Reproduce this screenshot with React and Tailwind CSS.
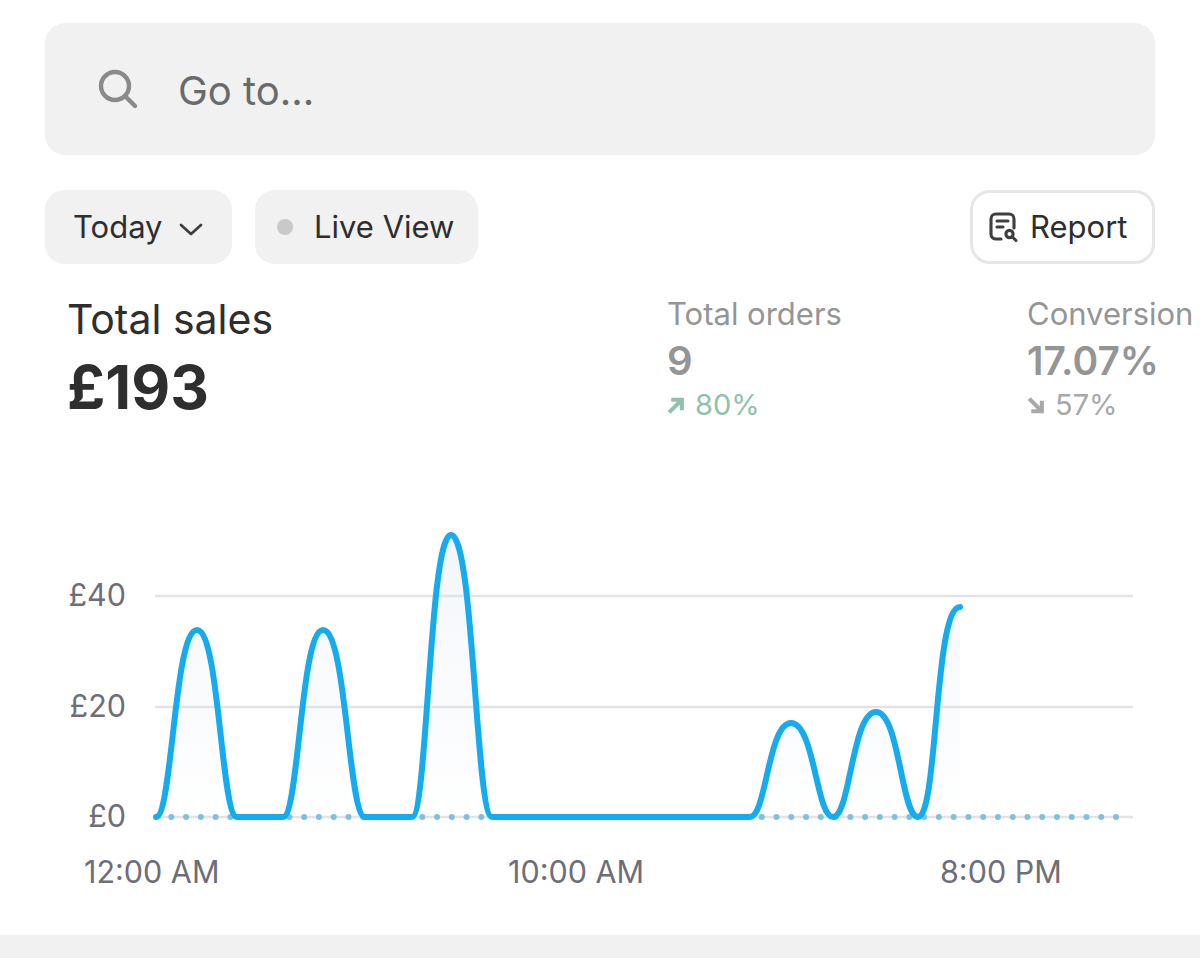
const base = 817;
// half-bell from one x to the next, same shape as the chart's smoothed line
const bell = (x0, px, x1, py) => {
  const low = 0.4;
  const top = 0.56;
  const a = px - x0;
  const b = x1 - px;
  return `C${x0 + a * low} ${base} ${px - a * top} ${py} ${px} ${py} C${px + b * top} ${py} ${x1 - b * low} ${base} ${x1} ${base} `;
};

const line =
  `M156 ${base} ` +
  bell(156, 197, 237, 630) +
  `L283 ${base} ` +
  bell(283, 323, 365, 630) +
  `L412 ${base} ` +
  bell(412, 451, 492, 535) +
  `L750 ${base} ` +
  bell(750, 791, 833, 723) +
  bell(833, 876, 918, 712) +
  `C938 ${base} 934 607 960 607`;

const dots = Array.from({ length: 65 }, (_, i) => 1116 - i * 14.76);

function Chart() {
  return (
    <svg viewBox="0 520 1200 390" className="block w-[1200px] h-[390px]">
      <defs>
        <linearGradient id="area" x1="0" y1="0" x2="0" y2="1">
          <stop offset="0" stopColor="#f3f6fa" />
          <stop offset="1" stopColor="#ffffff" />
        </linearGradient>
      </defs>
      <path d={`${line} L960 ${base} Z`} fill="url(#area)" />
      <g stroke="#e3e3e7" strokeWidth="2.5">
        <line x1="155" x2="1133" y1="596" y2="596" />
        <line x1="155" x2="1133" y1="707" y2="707" />
        <line x1="155" x2="1133" y1="817" y2="817" />
      </g>
      {dots.map((x) => (
        <circle key={x} cx={x} cy="817" r="3" fill="#7cc2dd" />
      ))}
      <path d={line} fill="none" stroke="#14aced" strokeWidth="6" strokeLinecap="round" strokeLinejoin="round" />
      <g fill="#6e6e76" className="font-['Inter',sans-serif] text-[30.5px]">
        <text x="126" y="606" textAnchor="end">£40</text>
        <text x="126" y="717" textAnchor="end">£20</text>
        <text x="126" y="827" textAnchor="end">£0</text>
        <text x="84" y="883">12:00 AM</text>
        <text x="508" y="883">10:00 AM</text>
        <text x="940" y="883">8:00 PM</text>
      </g>
    </svg>
  );
}

function SearchIcon() {
  return (
    <svg viewBox="0 0 40 40" className="w-10 h-10" fill="none" stroke="#8a8a8a" strokeWidth="4.4" strokeLinecap="round">
      <circle cx="17" cy="17" r="14" />
      <path d="M27 27l10 10" />
    </svg>
  );
}

function ReportIcon() {
  return (
    <svg viewBox="0 0 32 32" className="w-[32px] h-[32px]" fill="none" stroke="#3f3f3f" strokeWidth="3.1" strokeLinecap="round">
      <path d="M13 28H8a5 5 0 0 1-5-5V8a5 5 0 0 1 5-5h13a5 5 0 0 1 5 5v9" />
      <path d="M9 10h11M9 16h6" />
      <circle cx="21.5" cy="23" r="3.6" />
      <path d="M25 26.5l3 3" />
    </svg>
  );
}

function UpArrow() {
  return (
    <svg viewBox="0 0 16 16" className="w-[17px] h-[17px]" fill="none" stroke="#8fc2aa" strokeWidth="3.8">
      <path d="M2 14.5L13 3.5M4 2.5h10v10" />
    </svg>
  );
}

function DownArrow() {
  return (
    <svg viewBox="0 0 16 16" className="w-[17px] h-[17px]" fill="none" stroke="#a8a8a8" strokeWidth="3.8">
      <path d="M2 1.5l11 11M14 3.5v10H4" />
    </svg>
  );
}

export default function App() {
  return (
    <div className="w-[1200px] h-[958px] overflow-hidden bg-white font-['Inter',sans-serif] text-[#2e2e2e] flex flex-col">
      <div className="mx-[45px] mt-[23px] h-[132px] rounded-[20px] bg-[#f1f1f1] flex items-center pl-[53px] gap-[40px]">
        <SearchIcon />
        <span className="pt-[4px] text-[40px] text-[#6a6a6a]">Go to...</span>
      </div>

      <div className="mx-[45px] mt-[35px] flex items-center gap-[23px]">
        <div className="h-[74px] w-[187px] rounded-[20px] bg-[#f1f1f1] flex items-center pl-[28px] gap-[16px] text-[31px]">
          <span>Today</span>
          <svg viewBox="0 0 24 24" className="w-[24px] h-[24px] mt-[3px]" fill="none" stroke="#3f3f3f" strokeWidth="2.8" strokeLinecap="round" strokeLinejoin="round">
            <path d="M2 8l10 9 10-9" />
          </svg>
        </div>
        <div className="h-[74px] w-[223px] rounded-[20px] bg-[#f1f1f1] flex items-center pl-[22px] gap-[21px] text-[31px]">
          <span className="w-4 h-4 rounded-full bg-[#c9c9c9]"></span>
          <span>Live View</span>
        </div>
        <div className="ml-auto h-[74px] w-[185px] rounded-[20px] border-[3px] border-[#e6e6e6] flex items-center pl-[15px] gap-[10px] text-[31px]">
          <ReportIcon />
          <span>Report</span>
        </div>
      </div>

      <div className="mt-[30px] pl-[67px] flex">
        <div className="w-[600px]">
          <div className="text-[41px] leading-[50px]">Total sales</div>
          <div className="mt-[8px] text-[60px] leading-[70px] font-bold">£193</div>
        </div>
        <div className="w-[360px] text-[#959595]">
          <div className="text-[31px] leading-[40px]">Total orders</div>
          <div className="text-[40px] leading-[54px] font-semibold">9</div>
          <div className="flex items-center gap-[11px] text-[#8fc2aa] text-[29px] leading-[34px]">
            <UpArrow />
            <span>80%</span>
          </div>
        </div>
        <div className="text-[#959595] whitespace-nowrap">
          <div className="text-[31px] leading-[40px]">Conversion</div>
          <div className="text-[39px] leading-[54px] font-semibold">17.07%</div>
          <div className="flex items-center gap-[11px] text-[#a8a8a8] text-[29px] leading-[34px]">
            <DownArrow />
            <span>57%</span>
          </div>
        </div>
      </div>

      <div className="mt-[98px]">
        <Chart />
      </div>

      <div className="mt-auto h-[23px] bg-[#f1f1f1] shrink-0"></div>
    </div>
  );
}
